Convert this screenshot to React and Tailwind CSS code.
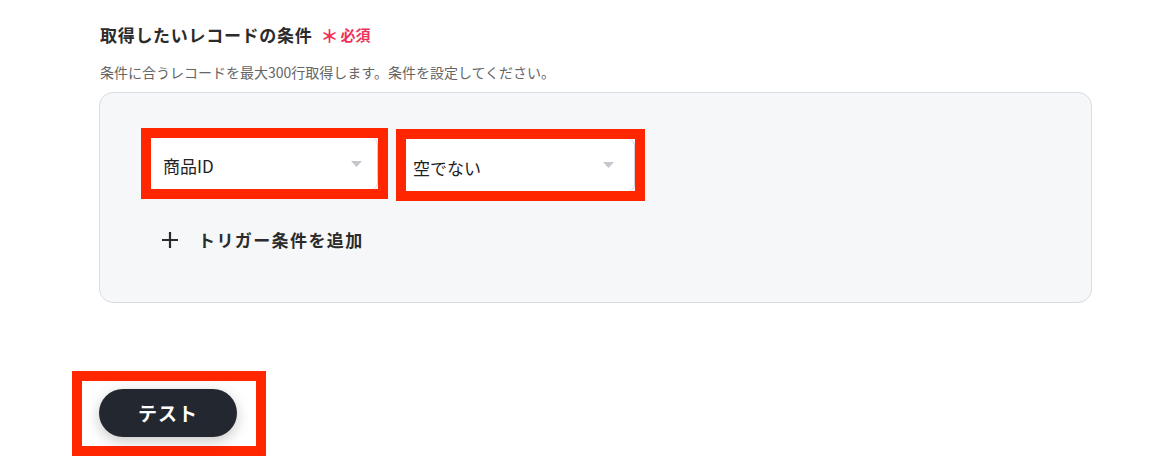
const FONT = "font-['Noto_Sans_CJK_JP','Noto_Sans',sans-serif]";

function Caret() {
  return (
    <svg width="11" height="6" viewBox="0 0 11 6" className="shrink-0">
      <path d="M0 0 L11 0 L5.5 6 Z" fill="#c4c7cc" />
    </svg>
  );
}

function MarkedSelect({ label, width, height, pl, pr, className = '' }) {
  return (
    <div className={`border-[10px] border-[#ff2600] overflow-hidden ${className}`} style={{ width, height }}>
      <div className="h-full bg-white flex items-center justify-between rounded-r-[7px] border-r border-[#cfd3d9]" style={{ paddingLeft: pl, paddingRight: pr }}>
        <span className="text-[17px] text-[#222] pt-[5px]">{label}</span>
        <Caret />
      </div>
    </div>
  );
}

export default function App() {
  return (
    <div className={`w-[1166px] h-[468px] bg-white overflow-hidden ${FONT}`}>
      <div className="pl-[100px] pt-[23px]">
        <div className="flex items-center h-6">
          <span className="text-[17px] font-bold text-[#2b2b2b] tracking-[0.7px]">取得したいレコードの条件</span>
          <span className="ml-[8px] text-[18px] font-bold text-[#ee3158] leading-none">＊</span>
          <span className="ml-[2px] text-[15px] font-bold text-[#ee3158]">必須</span>
        </div>
        <p className="mt-[15px] text-[14px] leading-5 text-[#666]">条件に合うレコードを最大300行取得します。条件を設定してください。</p>
      </div>

      <div className="ml-[99px] mt-[10px] w-[993px] h-[211px] bg-[#f6f7f9] border border-[#d8dce2] rounded-[14px] pl-[41px] pt-[35px]">
        <div className="flex items-start gap-[8px]">
          <MarkedSelect label="商品ID" width={247} height={71} pl={12} pr={15} />
          <MarkedSelect label="空でない" width={249} height={72} pl={7} pr={20} className="mt-px" />
        </div>
        <button className="mt-[26px] ml-[21px] flex items-center gap-[20px] text-[#2b2b2b]">
          <svg width="16" height="16" viewBox="0 0 16 16">
            <path d="M8 0 V16 M0 8 H16" stroke="#2b2b2b" strokeWidth="2.2" />
          </svg>
          <span className="text-[17px] font-bold tracking-[1.4px]">トリガー条件を追加</span>
        </button>
      </div>

      <div className="ml-[72px] mt-[68px] w-[194px] h-[85px] border-[10px] border-[#ff2600] pl-[17px] pt-[8px]">
        <button className="w-[138px] h-[48px] rounded-full bg-[#23272f] text-white text-[19px] font-bold tracking-[1px] shadow-[0_4px_14px_rgba(0,0,0,0.22)] flex items-center justify-center">
          テスト
        </button>
      </div>
    </div>
  );
}
